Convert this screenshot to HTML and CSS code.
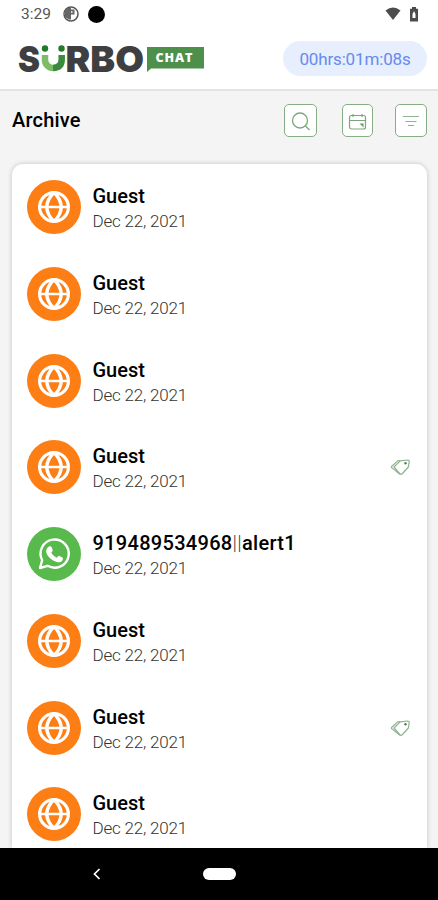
FILE: index.html
```
<!DOCTYPE html>
<html lang="en">
<head>
  <meta charset="UTF-8">
  <meta name="viewport" content="width=device-width, initial-scale=1.0">
  <title>Surbo Chat</title>
  <link rel="stylesheet" href="styles.css">
</head>
<body>
<!-- shared icons -->
<svg class="sprite" width="0" height="0">
  <symbol id="globe" viewBox="0 0 54 54">
    <g fill="none" stroke="#fff" stroke-width="3.2">
      <circle cx="27" cy="27" r="14.4"/>
      <path d="M27 12.500Q12.500 27 27 41.500M27 12.500Q41.500 27 27 41.500" stroke-width="3.400"/>
      <path d="M13 27h28" stroke-width="2.600"/>
    </g>
  </symbol>
  <symbol id="whatsapp" viewBox="0 0 54 54">
    <path d="M13 41.500l2.200-7.800a14.100 14.100 0 1 1 5.400 5.600z" transform="translate(0 -.5)" fill="none" stroke="#fff" stroke-width="2.400" stroke-linejoin="round"/>
    <path d="M22 19.500c1-.6 2.100-.4 2.500.5l1.200 2.900c.4 1-.9 2-1.400 2.700 1.200 2.500 3 4 5.600 5.100.8-.7 1.600-2.200 2.600-1.800l2.900 1.500c1 .5.5 2.300-.2 3.300-1.100 1.500-3.300 1.900-5.400 1.300-5-1.400-8.800-4.700-10.400-9.200-.8-2.400.7-5.200 2.600-6.300z" fill="#fff"/>
  </symbol>
  <symbol id="tag" viewBox="0 0 22 20">
    <g fill="none" stroke="#8fb18f" stroke-width="1.200" stroke-linejoin="round">
      <path d="M4 10l6.200-6.200 7.600-.8q1.500 0 1.400 1.500l-.8 5.500-6.400 7q-1 .7-2 0z"/>
      <path d="M10.200 3.500l-2.500.4-5.900 5.300q-.8.9.2 1.700l7 5.600 1.500.6"/>
    </g>
    <circle cx="15.500" cy="6.300" r="1.200" fill="#527b52"/>
  </symbol>
</svg>

<div class="phone">
  <header>
    <div class="status-bar">
      <span class="time">3:29</span>
      <svg class="app-icon" width="16" height="16" viewBox="0 0 16 16">
        <circle cx="8" cy="8" r="7" fill="#fff" stroke="#555" stroke-width="1.500"/>
        <path d="M2 4.500L5 2h3v11.500H6L2 11zM8 3.500h3.500v5H8z" fill="#666"/>
        <path d="M8 5h1.500v2H8z" fill="#ddd"/>
      </svg>
      <span class="dot"></span>
      <svg class="wifi" width="16" height="14" viewBox="0 0 16 14"><path d="M.5 3.600Q8-2.400 15.500 3.600L8 13z" fill="#4c4c4c"/></svg>
      <svg class="battery" width="10" height="15" viewBox="0 0 10 15"><path d="M3 0h4v1.800h2V14.500H1V1.800h2z" fill="#4c4c4c"/><path d="M5 4l1.500 3v4h-3V7z" fill="#fff"/></svg>
    </div>
    <div class="brand-bar">
      <svg class="logo" width="188" height="50" viewBox="0 -8 188 50">
        <text class="logo-text" x="0" y="30.500" textLength="22" lengthAdjust="spacingAndGlyphs">S</text>
        <path d="M27 14v4.500a8.200 8.200 0 0 0 8.200 8.500" fill="none" stroke="#80bb68" stroke-width="6.500"/>
        <path d="M35 27q8.700-.3 8.700-8.500V14" fill="none" stroke="#3b8b3c" stroke-width="6.500"/>
        <circle cx="27" cy="7.500" r="3.200" fill="#227b28"/>
        <circle cx="43.500" cy="7.500" r="3.200" fill="#227b28"/>
        <text class="logo-text" x="47.500" y="30.500" textLength="78.500" lengthAdjust="spacingAndGlyphs">RBO</text>
        <path d="M129 6h57v21.500h-53l-4 3.500z" fill="#4c904b"/>
        <text class="logo-chat" x="137.500" y="21" textLength="37">CHAT</text>
      </svg>
      <div class="timer">00hrs:01m:08s</div>
    </div>
  </header>

  <div class="toolbar">
    <h1>Archive</h1>
    <button class="search" aria-label="Search">
      <svg width="32" height="32" viewBox="0 0 32 32"><g fill="none" stroke="#7ba77b" stroke-width="1.300"><circle cx="16" cy="15.500" r="7.500"/><path d="M21.500 21l4 4"/></g></svg>
    </button>
    <button class="calendar" aria-label="Calendar">
      <svg width="31" height="32" viewBox="0 0 31 32"><g fill="none" stroke="#7ba77b" stroke-width="1.200"><rect x="7.500" y="10.500" width="16" height="13.500" rx="2"/><path d="M7.500 15.500h16M11 9v3M20 9v3"/></g><path d="M17.500 18.500h4v4z" fill="#6a9a6a"/></svg>
    </button>
    <button class="filter" aria-label="Filter">
      <svg width="32" height="32" viewBox="0 0 32 32"><path d="M8 11.500h16M10.500 16.500h11M13 20.500h6" fill="none" stroke="#8fb38f" stroke-width="1.200"/></svg>
    </button>
  </div>

  <div class="list">
    <div class="row">
      <svg class="avatar web"><use href="#globe"/></svg>
      <div class="info"><div class="name">Guest</div><div class="date">Dec 22, 2021</div></div>
    </div>
    <div class="row">
      <svg class="avatar web"><use href="#globe"/></svg>
      <div class="info"><div class="name">Guest</div><div class="date">Dec 22, 2021</div></div>
    </div>
    <div class="row">
      <svg class="avatar web"><use href="#globe"/></svg>
      <div class="info"><div class="name">Guest</div><div class="date">Dec 22, 2021</div></div>
    </div>
    <div class="row">
      <svg class="avatar web"><use href="#globe"/></svg>
      <div class="info"><div class="name">Guest</div><div class="date">Dec 22, 2021</div></div>
      <svg class="tag"><use href="#tag"/></svg>
    </div>
    <div class="row">
      <svg class="avatar whatsapp"><use href="#whatsapp"/></svg>
      <div class="info"><div class="name number">919489534968<span class="bars">||</span>alert1</div><div class="date">Dec 22, 2021</div></div>
    </div>
    <div class="row">
      <svg class="avatar web"><use href="#globe"/></svg>
      <div class="info"><div class="name">Guest</div><div class="date">Dec 22, 2021</div></div>
    </div>
    <div class="row">
      <svg class="avatar web"><use href="#globe"/></svg>
      <div class="info"><div class="name">Guest</div><div class="date">Dec 22, 2021</div></div>
      <svg class="tag"><use href="#tag"/></svg>
    </div>
    <div class="row">
      <svg class="avatar web"><use href="#globe"/></svg>
      <div class="info"><div class="name">Guest</div><div class="date">Dec 22, 2021</div></div>
    </div>
  </div>

  <div class="nav-bar">
    <svg class="back" width="8" height="12" viewBox="0 0 8 12"><path d="M6.500 1L1.500 6l5 5" fill="none" stroke="#fff" stroke-width="1.700"/></svg>
    <div class="home"></div>
  </div>
</div>
</body>
</html>
```
FILE: styles.css
```
* { box-sizing: border-box; margin: 0; padding: 0; }
body { font-family: Roboto, "Liberation Sans", sans-serif; background: #f4f4f4; color: #000; overflow: hidden; }
.sprite { display: block; }
.phone { display: flex; flex-direction: column; height: 900px; width: 438px; }

header { flex: none; height: 91px; background: #fff; border-bottom: 2px solid #e4e4e4; }
.status-bar { display: flex; align-items: center; height: 28px; padding: 0 19px 0 21px; }
.time { width: 42px; font-size: 15.5px; color: #555; }
.dot { width: 17px; height: 17px; margin-left: 9px; border-radius: 50%; background: #000; }
.wifi { margin-left: auto; }
.battery { margin-left: 8px; }
.brand-bar { display: flex; justify-content: space-between; padding: 5px 11px 0 18px; }
.logo { display: block; }
.logo-text { font: 900 36px Inter, sans-serif; fill: #3f3f42; }
.logo-chat { font: 800 12.5px "Open Sans", sans-serif; fill: #fff; }
.timer { width: 144px; height: 35px; margin-top: 8px; line-height: 36px; border-radius: 18px; background: #e7eefe; color: #658bee; font-size: 17px; letter-spacing: -.15px; text-align: center; }

.toolbar { display: flex; flex: none; height: 72px; padding: 13px 11px 0 12px; }
.toolbar h1 { flex: 1; font-size: 20px; font-weight: 500; line-height: 32px; letter-spacing: .2px; }
.toolbar button { height: 33px; border: 1px solid #85ae85; border-radius: 5px; background: #fff; }
.toolbar button svg { display: block; margin: -1px; }
.search { width: 33px; }
.calendar { width: 31px; margin-left: 25px; }
.filter { width: 32px; margin-left: 22px; }

.list { flex: 1; min-height: 0; overflow: hidden; margin: 1px 11px 0 12px; padding: 16px 15px 0; border-radius: 11px 11px 0 0; background: #fff; box-shadow: 0 0 5px rgba(0, 0, 0, .2); }
.row { display: flex; height: 86.75px; }
.avatar { width: 54px; height: 54px; border-radius: 50%; }
.web { background: #fd7e14; }
.whatsapp { background: #58b94c; }
.info { flex: 1; padding: 4px 0 0 11.5px; }
.name { font-size: 20px; font-weight: 500; line-height: 25px; }
.number { letter-spacing: .3px; }
.bars { font-weight: 300; color: #444; }
.date { font-size: 17px; font-weight: 300; line-height: 25px; letter-spacing: -.2px; color: #333; }
.tag { width: 22px; height: 20px; margin-top: 17px; }

.nav-bar { position: relative; z-index: 1; display: flex; flex: none; align-items: center; height: 52px; padding-left: 93px; background: #000; }
.home { width: 33px; height: 12px; margin-left: 102px; border-radius: 6px; background: #fff; }
```
